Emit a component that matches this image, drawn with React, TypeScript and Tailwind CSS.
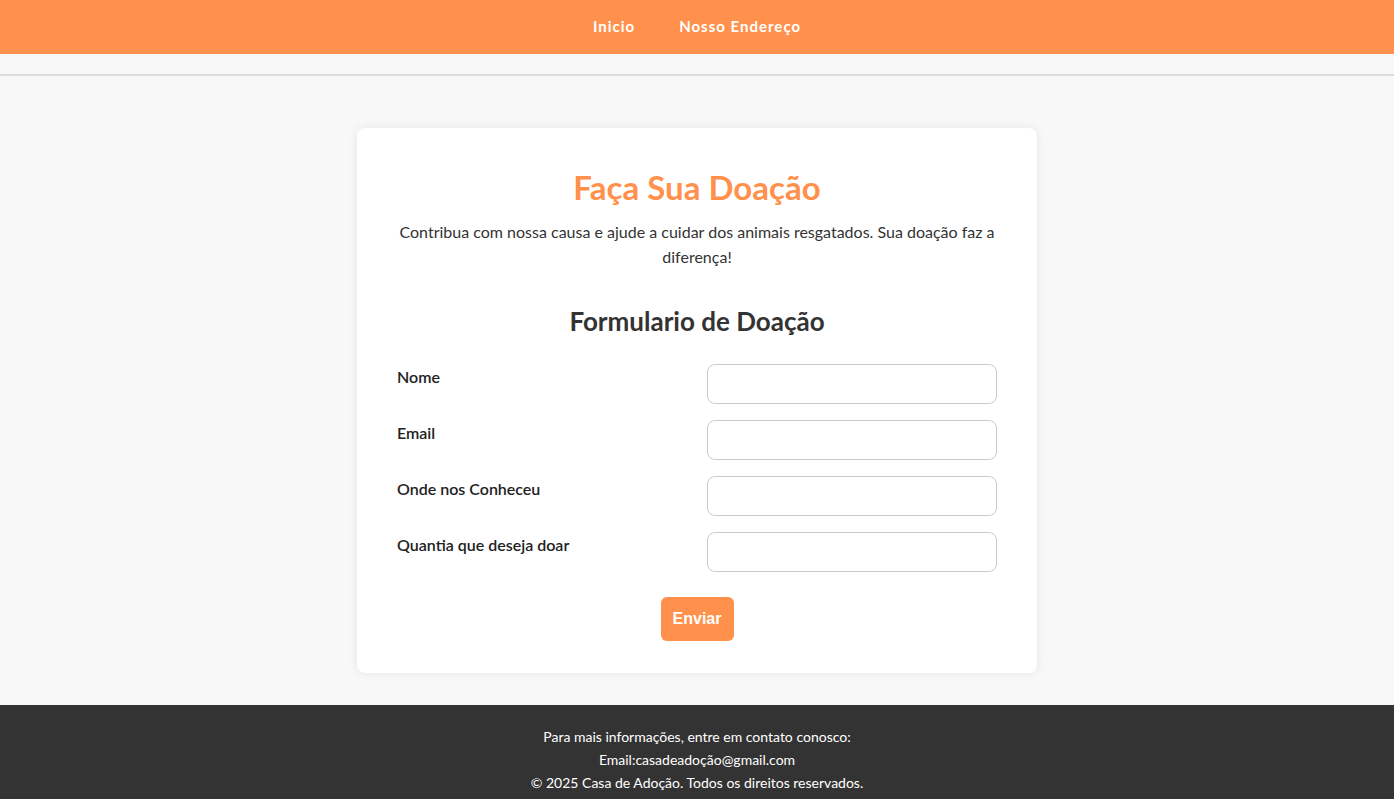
import React from "react";

const campos = ["Nome", "Email", "Onde nos Conheceu", "Quantia que deseja doar"];

export default function App() {
  return (
    <div className="min-h-screen flex flex-col bg-[#f8f8f8] text-[#333] font-['Lato','Noto_Sans',sans-serif]">
      <header className="h-[54px] bg-[#ff914d] flex items-center justify-center">
        <nav className="flex gap-x-[44px] pb-[1px]">
          <a href="#" className="text-white font-bold text-[15px] tracking-[1px]">
            Inicio
          </a>
          <a href="#" className="text-white font-bold text-[15px] tracking-[1px]">
            Nosso Endereço
          </a>
        </nav>
      </header>
      <div className="h-[22px] border-b-2 border-[#dddddd]"></div>

      <main className="flex-1 flex justify-center pt-[52px] pb-[32px]">
        <section className="w-[680px] bg-white rounded-lg shadow-[0_0_10px_rgba(0,0,0,0.08)] px-10 pt-10 pb-8">
          <h1 className="text-center text-[33px] leading-[38px] font-bold text-[#ff914d]">
            Faça Sua Doação
          </h1>
          <p className="text-center text-[16px] leading-[25px] mt-[13px] text-[#333]">
            Contribua com nossa causa e ajude a cuidar dos animais resgatados. Sua doação faz a
            diferença!
          </p>

          <h2 className="text-center text-[26px] font-bold mt-[37px] leading-[30px]">
            Formulario de Doação
          </h2>

          <form className="mt-[28px] flex flex-col gap-y-4">
            {campos.map((campo) => (
              <div key={campo} className="flex justify-between items-start">
                <label className="text-[16px] font-semibold pt-[1px] text-[#222]">{campo}</label>
                <input className="w-[290px] h-[40px] border border-[#cccccc] rounded-lg px-2" />
              </div>
            ))}
            <div className="flex justify-center mt-[9px]">
              <button
                type="button"
                className="bg-[#ff914d] text-white rounded-md h-[44px] w-[73px] text-[16px] font-bold font-['Liberation_Sans',Arial,sans-serif]"
              >
                Enviar
              </button>
            </div>
          </form>
        </section>
      </main>

      <footer className="bg-[#333] text-white text-center text-[14px] leading-[23px] pt-[20px] pb-[5px]">
        <p>Para mais informações, entre em contato conosco:</p>
        <p>Email:casadeadoção@gmail.com</p>
        <p>© 2025 Casa de Adoção. Todos os direitos reservados.</p>
      </footer>
    </div>
  );
}
